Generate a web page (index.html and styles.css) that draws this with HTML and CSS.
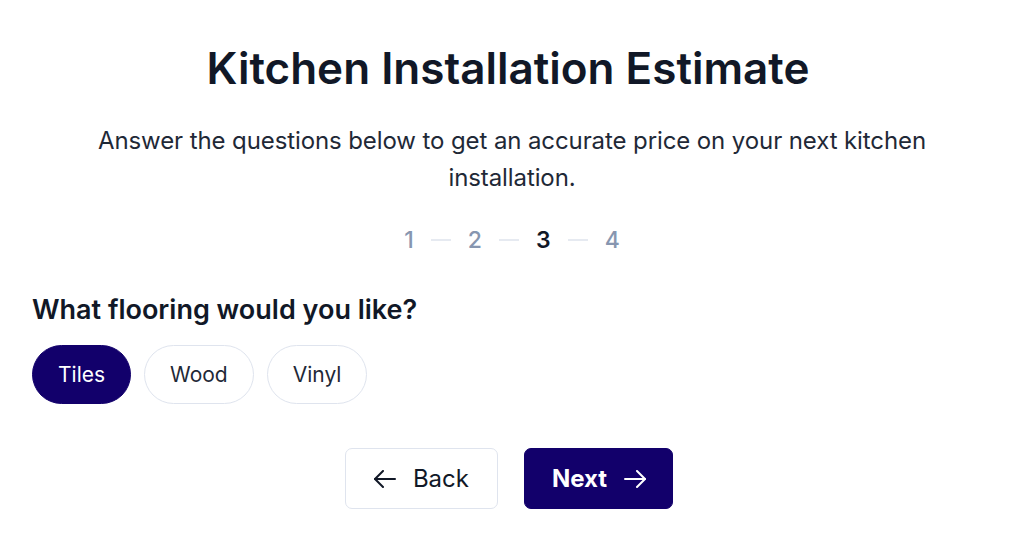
FILE: index.html
```html
<!DOCTYPE html>
<html lang="en">
<head>
  <meta charset="UTF-8" />
  <meta name="viewport" content="width=device-width, initial-scale=1" />
  <title>Kitchen Installation Estimate</title>
  <link rel="stylesheet" href="styles.css">
</head>
<body>
  <main class="estimate">
    <h1>Kitchen Installation Estimate</h1>
    <p class="intro">Answer the questions below to get an accurate price on your next kitchen installation.</p>

    <ol class="steps">
      <li class="step">1</li>
      <li class="sep"></li>
      <li class="step">2</li>
      <li class="sep"></li>
      <li class="step active">3</li>
      <li class="sep"></li>
      <li class="step">4</li>
    </ol>

    <section class="question">
      <h2>What flooring would you like?</h2>
      <div class="options">
        <button class="pill selected">Tiles</button>
        <button class="pill">Wood</button>
        <button class="pill">Vinyl</button>
      </div>
    </section>

    <div class="nav-buttons">
      <button class="btn btn-back">
        <svg width="22" height="18" viewBox="0 0 22 18" fill="none" stroke="currentColor" stroke-width="2" stroke-linecap="round" stroke-linejoin="round"><path d="M21 9H1"/><path d="M9 1L1 9l8 8"/></svg>
        Back
      </button>
      <button class="btn btn-next">
        Next
        <svg width="22" height="18" viewBox="0 0 22 18" fill="none" stroke="currentColor" stroke-width="2" stroke-linecap="round" stroke-linejoin="round"><path d="M1 9h20"/><path d="M13 1l8 8-8 8"/></svg>
      </button>
    </div>
  </main>
</body>
</html>
```

FILE: styles.css
```css
/* Base */
body {
  margin: 0;
  background: #ffffff;
  color: #111827;
  font-family: 'Inter', 'Noto Sans', sans-serif;
}
.estimate {
  padding: 40px 32px;
}
h1 {
  margin: 0 8px 0 0;
  text-align: center;
  font-size: 44px;
  font-weight: 600;
  line-height: 56px;
}
.intro {
  max-width: 880px;
  margin: 26px auto 0;
  text-align: center;
  font-size: 24px;
  line-height: 37px;
  letter-spacing: -0.1px;
  color: #1f2937;
}

/* Stepper */
.steps {
  list-style: none;
  margin: 30px 0 0;
  padding: 0;
  display: flex;
  justify-content: center;
  align-items: center;
  gap: 17px;
}
.step {
  font-size: 23px;
  line-height: 28px;
  color: #8796b0;
  font-weight: 500;
}
.step.active {
  color: #111827;
  font-weight: 600;
}
.sep {
  width: 20px;
  height: 2px;
  background: #e6eaf1;
}

/* Question */
.question {
  margin-top: 40px;
}
h2 {
  margin: 0;
  font-size: 27px;
  font-weight: 600;
  line-height: 32px;
}
.options {
  display: flex;
  gap: 13px;
  margin-top: 19px;
}
.pill {
  height: 59px;
  padding: 0 25px;
  border: 1px solid #dfe4ee;
  border-radius: 999px;
  background: #fff;
  color: #1f2937;
  font-family: inherit;
  font-size: 21px;
}
.pill.selected {
  background: #12006b;
  border-color: #12006b;
  color: #fff;
}

/* Back / Next */
.nav-buttons {
  display: flex;
  justify-content: center;
  gap: 26px;
  margin: 44px 6px 0 0;
}
.btn {
  display: flex;
  align-items: center;
  gap: 17px;
  height: 61px;
  padding: 0 28px;
  border-radius: 7px;
  font-family: inherit;
  font-size: 24px;
}
.btn-back {
  background: #fff;
  border: 1px solid #dfe4ee;
  color: #111827;
}
.btn-next {
  padding: 0 26px 0 27px;
  background: #12006b;
  border: 1px solid #12006b;
  color: #fff;
  font-weight: 700;
}
```
